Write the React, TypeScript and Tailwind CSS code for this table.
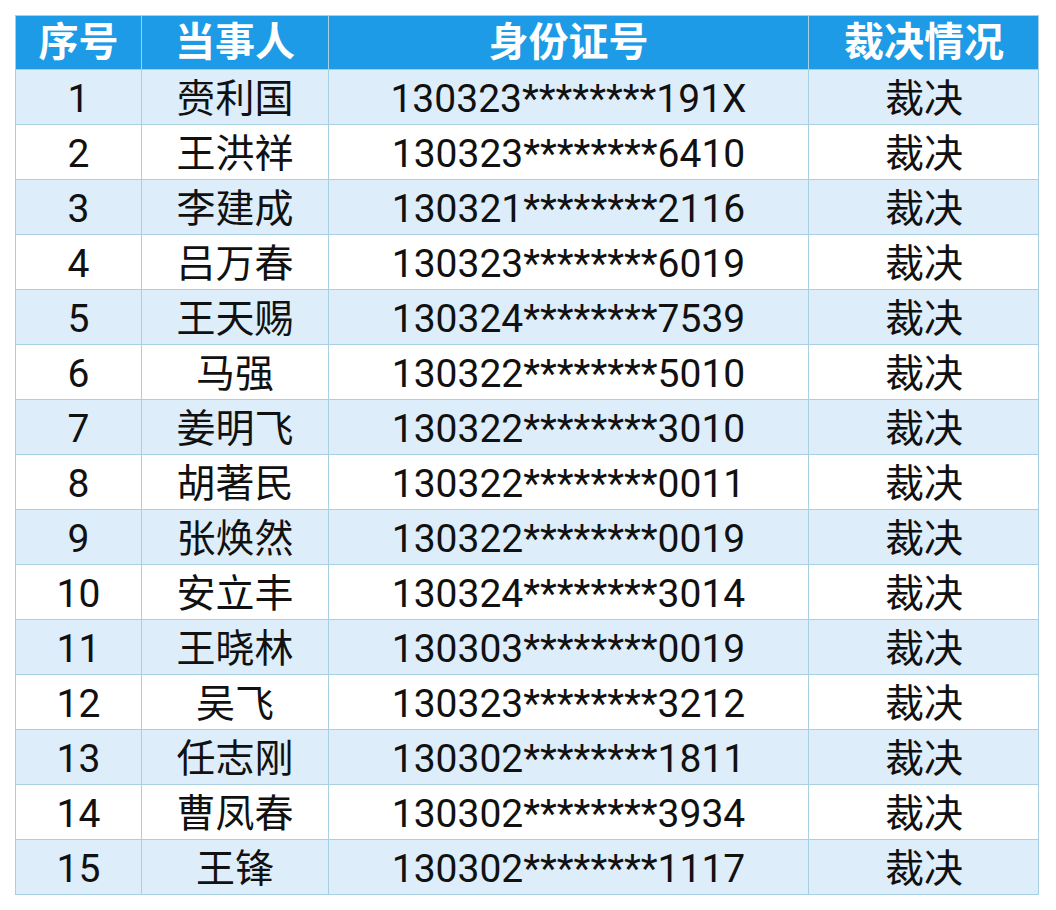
const rows: [string, string, string][] = [
  ['1', '赍利国', '130323********191X'],
  ['2', '王洪祥', '130323********6410'],
  ['3', '李建成', '130321********2116'],
  ['4', '吕万春', '130323********6019'],
  ['5', '王天赐', '130324********7539'],
  ['6', '马强', '130322********5010'],
  ['7', '姜明飞', '130322********3010'],
  ['8', '胡著民', '130322********0011'],
  ['9', '张焕然', '130322********0019'],
  ['10', '安立丰', '130324********3014'],
  ['11', '王晓林', '130303********0019'],
  ['12', '吴飞', '130323********3212'],
  ['13', '任志刚', '130302********1811'],
  ['14', '曹凤春', '130302********3934'],
  ['15', '王锋', '130302********1117'],
]

const cols = 'grid grid-cols-[126px_187px_480px_230px]'

export default function App() {
  return (
    <div className="w-[1056px] h-[910px] bg-white pt-[15px] pl-[15px] font-['Roboto','Noto_Sans_CJK_SC',sans-serif]">
      <div className="w-[1024px] border border-[#a8d0e2]">
        {/* Header */}
        <div className={`${cols} h-[53px] bg-[#1d9be6] text-white font-bold text-[40px]`}>
          {['序号', '当事人', '身份证号', '裁决情况'].map((h, i) => (
            <div
              key={h}
              className={`flex items-center justify-center leading-none ${i < 3 ? 'border-r border-[#a8d0e2]' : ''}`}
            >
              {h}
            </div>
          ))}
        </div>

        {/* Body */}
        {rows.map(([no, name, id], r) => (
          <div
            key={no}
            className={`${cols} h-[55px] border-t border-[#a8d0e2] text-[39px] text-[#111] ${
              r % 2 === 0 ? 'bg-[#ddedf9]' : 'bg-white'
            }`}
          >
            <div className="flex items-center justify-center pt-[5px] leading-none border-r border-[#a8d0e2]">{no}</div>
            <div className="flex items-center justify-center pt-[5px] leading-none border-r border-[#a8d0e2]">{name}</div>
            <div className="flex items-center justify-center pt-[5px] leading-none border-r border-[#a8d0e2]">{id}</div>
            <div className="flex items-center justify-center pt-[5px] leading-none">裁决</div>
          </div>
        ))}
      </div>
    </div>
  )
}
